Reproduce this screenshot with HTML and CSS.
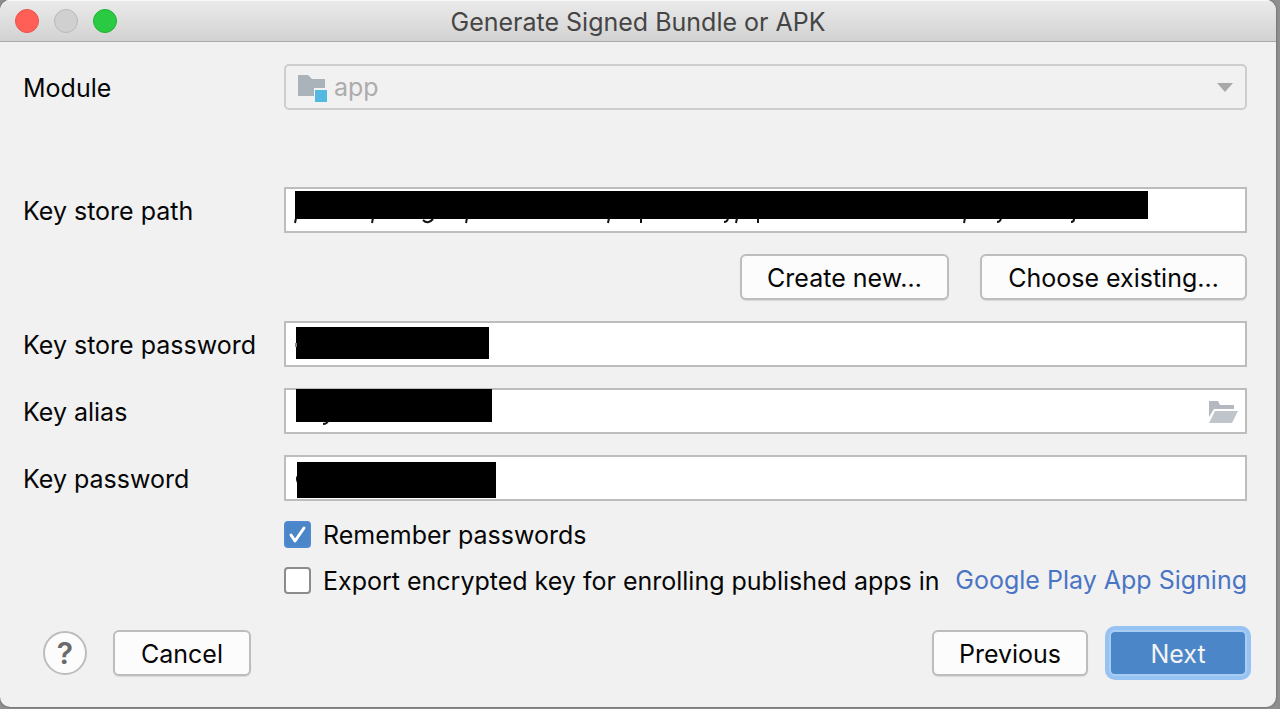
FILE: index.html
```html
<!DOCTYPE html>
<html lang="en">
<head>
<meta charset="utf-8">
<meta name="viewport" content="width=device-width, initial-scale=1">
<title>Generate Signed Bundle or APK</title>
<link rel="stylesheet" href="styles.css">
</head>
<body>
<main class="window">
  <header class="titlebar">
    <div class="lights">
      <button class="light light-close" type="button" aria-label="Close"></button>
      <button class="light light-minimize" type="button" aria-label="Minimize" disabled></button>
      <button class="light light-zoom" type="button" aria-label="Zoom"></button>
    </div>
    <h1 class="title">Generate Signed Bundle or APK</h1>
  </header>
  <form class="form">
    <div class="row row-module">
      <label class="label" for="module">Module</label>
      <div class="field">
        <select class="select" id="module" disabled><option>app</option></select>
        <svg class="module-icon" width="30" height="28" viewBox="0 0 30 28" aria-hidden="true">
          <path d="M0 0H9Q11 0 12 2L14 4H27V21H0Z" fill="#a9b3b9"/>
          <path d="M16 13H30V28H16Z" fill="#f1f1f1"/>
          <path d="M17 15H29V27H17Z" fill="#52b9e0"/>
        </svg>
        <svg class="arrow" width="16" height="9" viewBox="0 0 16 9" aria-hidden="true"><path d="M0 0H16L8 9Z" fill="#a9a9a9"/></svg>
      </div>
    </div>
    <div class="row">
      <label class="label" for="path">Key store path</label>
      <div class="field">
        <input class="input" id="path" type="text">
        <svg class="mask mask-path" width="857" height="36" viewBox="0 0 857 36" aria-hidden="true">
          <path d="M1 0H854V28H1Z"/>
          <path class="mark" d="M2 27L1 32M79 27L78 32M173 27L172 32M315 27L314 32M347 27V32M443 27L442 32M464 27V32M671 27L670 32"/>
          <path class="mark" d="M129 29Q134 34 139 28M434 28Q433 31 430 31M707 28Q706 31 703 31M780 28Q780 31 777 31"/>
        </svg>
      </div>
    </div>
    <div class="actions">
      <button class="button button-create" type="button">Create new…</button>
      <button class="button button-choose" type="button">Choose existing…</button>
    </div>
    <div class="row">
      <label class="label" for="store-password">Key store password</label>
      <div class="field">
        <input class="input" id="store-password" type="password">
        <svg class="mask mask-store" width="195" height="32" viewBox="0 0 195 32" aria-hidden="true"><path d="M1 0H194V32H1Z"/><path d="M0 16H2V20H0Z" fill="#888"/></svg>
      </div>
    </div>
    <div class="row">
      <label class="label" for="alias">Key alias</label>
      <div class="field">
        <input class="input" id="alias" type="text">
        <svg class="mask mask-alias" width="197" height="38" viewBox="0 0 197 38" aria-hidden="true"><path d="M1 0H197V33H1Z"/><path class="mark" d="M33 32Q32 35 28 35"/></svg>
        <button class="browse" type="button" aria-label="Browse aliases">
          <svg width="30" height="22" viewBox="0 0 30 22" aria-hidden="true"><path d="M1 0H10L12 4H26V8H6L1 16Z" fill="#b3b9be"/><path d="M7 10H30L24 22H1Z" fill="#bfc5ca"/></svg>
        </button>
      </div>
    </div>
    <div class="row row-last">
      <label class="label" for="key-password">Key password</label>
      <div class="field">
        <input class="input" id="key-password" type="password">
        <svg class="mask mask-key" width="201" height="36" viewBox="0 0 201 36" aria-hidden="true"><path d="M2 0H201V36H2Z"/><path d="M3 12Q-1 17 3 22Z"/></svg>
      </div>
    </div>
    <div class="checks">
      <div class="check">
        <input class="box" id="remember" type="checkbox" checked>
        <svg class="tick" width="27" height="27" viewBox="0 0 27 27" aria-hidden="true"><path d="M7 14L11 20L20 7" fill="none" stroke="#fff" stroke-width="3" stroke-linecap="round" stroke-linejoin="round"/></svg>
        <label for="remember">Remember passwords</label>
      </div>
      <div class="check">
        <input class="box" id="export" type="checkbox">
        <label for="export">Export encrypted key for enrolling published apps in</label>
        <a class="link" href="#">Google Play App Signing</a>
      </div>
    </div>
    <footer class="footer">
      <button class="help" type="button" aria-label="Help">?</button>
      <button class="button button-small" type="button">Cancel</button>
      <span class="spacer"></span>
      <button class="button button-previous" type="button">Previous</button>
      <button class="button button-small button-primary" type="submit">Next</button>
    </footer>
  </form>
</main>
</body>
</html>
```
FILE: styles.css
```css
* {
  box-sizing: border-box;
}

html {
  background: #8f8f8f;
}

body {
  margin: 0;
  padding: 0 4px 2px 0;
  font: 25px/30px Inter, "Liberation Sans", sans-serif;
  color: #060606;
}

button,
input,
select {
  margin: 0;
  font: inherit;
  color: inherit;
}

.window {
  overflow: hidden;
  border-radius: 10px;
  background: #f1f1f1;
  box-shadow: 0 0 2px #444;
}

.titlebar {
  display: grid;
  grid-template-columns: 1fr auto 1fr;
  align-items: center;
  height: 42px;
  padding: 0 15px;
  border-bottom: 1px solid #a9a9a9;
  background: linear-gradient(#ebebeb, #d2d2d2);
  box-shadow: inset 0 1px #f8f8f8;
}

.lights {
  display: flex;
  gap: 15px;
}

.light {
  width: 24px;
  height: 24px;
  padding: 0;
  border: 1px solid #e9524a;
  border-radius: 50%;
  background: #ff5f57;
}

.light-minimize {
  border-color: #b8b8b8;
  background: #d0d0d0;
}

.light-zoom {
  border-color: #1fb032;
  background: #2acb42;
}

.title {
  margin: 0;
  padding-top: 2px;
  font-size: 25px;
  font-weight: 400;
  line-height: 30px;
  color: #454545;
}

.form {
  padding: 22px 29px 31px 23px;
}

.row {
  display: grid;
  grid-template-columns: 261px 1fr;
  align-items: center;
  margin-bottom: 21px;
}

.row-module {
  margin-bottom: 77px;
}

.row-last {
  margin-bottom: 20px;
}

.label {
  padding-top: 2px;
  white-space: nowrap;
}

.field {
  position: relative;
  display: flex;
}

.input,
.select {
  width: 100%;
  height: 46px;
  padding: 0 10px;
  border: 2px solid #bdbdbd;
  border-radius: 0;
  background: #fff;
  outline: none;
}

.select {
  appearance: none;
  padding-left: 48px;
  border-color: #cdcdcd;
  border-radius: 5px;
  background: #f1f1f1;
  color: #acacac;
  opacity: 1;
}

.module-icon {
  position: absolute;
  left: 14px;
  top: 11px;
}

.arrow {
  position: absolute;
  right: 14px;
  top: 19px;
}

.mask {
  position: absolute;
  left: 11px;
}

.mark {
  fill: none;
  stroke: #111;
  stroke-width: 2;
}

.mask-path {
  left: 10px;
  top: 4px;
}

.mask-store {
  top: 6px;
}

.mask-alias {
  top: 1px;
}

.mask-key {
  top: 7px;
}

.browse {
  position: absolute;
  right: 9px;
  top: 13px;
  display: flex;
  padding: 0;
  border: 0;
  background: none;
}

.actions {
  display: flex;
  justify-content: flex-end;
  gap: 31px;
  margin-bottom: 21px;
}

.button {
  height: 46px;
  padding: 2px 0 0;
  border: 2px solid #bdbdbd;
  border-radius: 6px;
  background: #fcfcfc;
  box-shadow: 0 1px 1px #dadada;
  white-space: nowrap;
}

.button-create {
  width: 209px;
}

.button-choose {
  width: 267px;
}

.button-small {
  width: 138px;
}

.button-previous {
  width: 156px;
}

.button-primary {
  border-color: #a8cdf5;
  background: #4a86c8;
  box-shadow: 0 0 0 4px #97c3f3;
  color: #f4f4f4;
}

.checks {
  display: grid;
  gap: 19px;
  padding-left: 261px;
}

.check {
  position: relative;
  display: flex;
  align-items: center;
  gap: 12px;
  height: 27px;
  white-space: nowrap;
}

.box {
  flex: none;
  appearance: none;
  width: 27px;
  height: 27px;
  border: 2px solid #8c8c8c;
  border-radius: 4px;
  background: #fff;
}

.box:checked {
  border-color: #5089d0;
  background: #4a86c8;
}

.tick {
  position: absolute;
  left: 0;
  top: 0;
  pointer-events: none;
}

.link {
  margin-left: auto;
  padding-bottom: 2px;
  color: #4a74c4;
  text-decoration: none;
}

.footer {
  display: flex;
  align-items: center;
  gap: 21px;
  margin-top: 36px;
  padding-left: 20px;
}

.help {
  width: 44px;
  height: 44px;
  margin-right: 5px;
  padding: 0;
  border: 2px solid #bdbdbd;
  border-radius: 50%;
  background: #fcfcfc;
  color: #6a6a6a;
  font-size: 30px;
  font-weight: 600;
}

.spacer {
  flex: 1;
}
```
